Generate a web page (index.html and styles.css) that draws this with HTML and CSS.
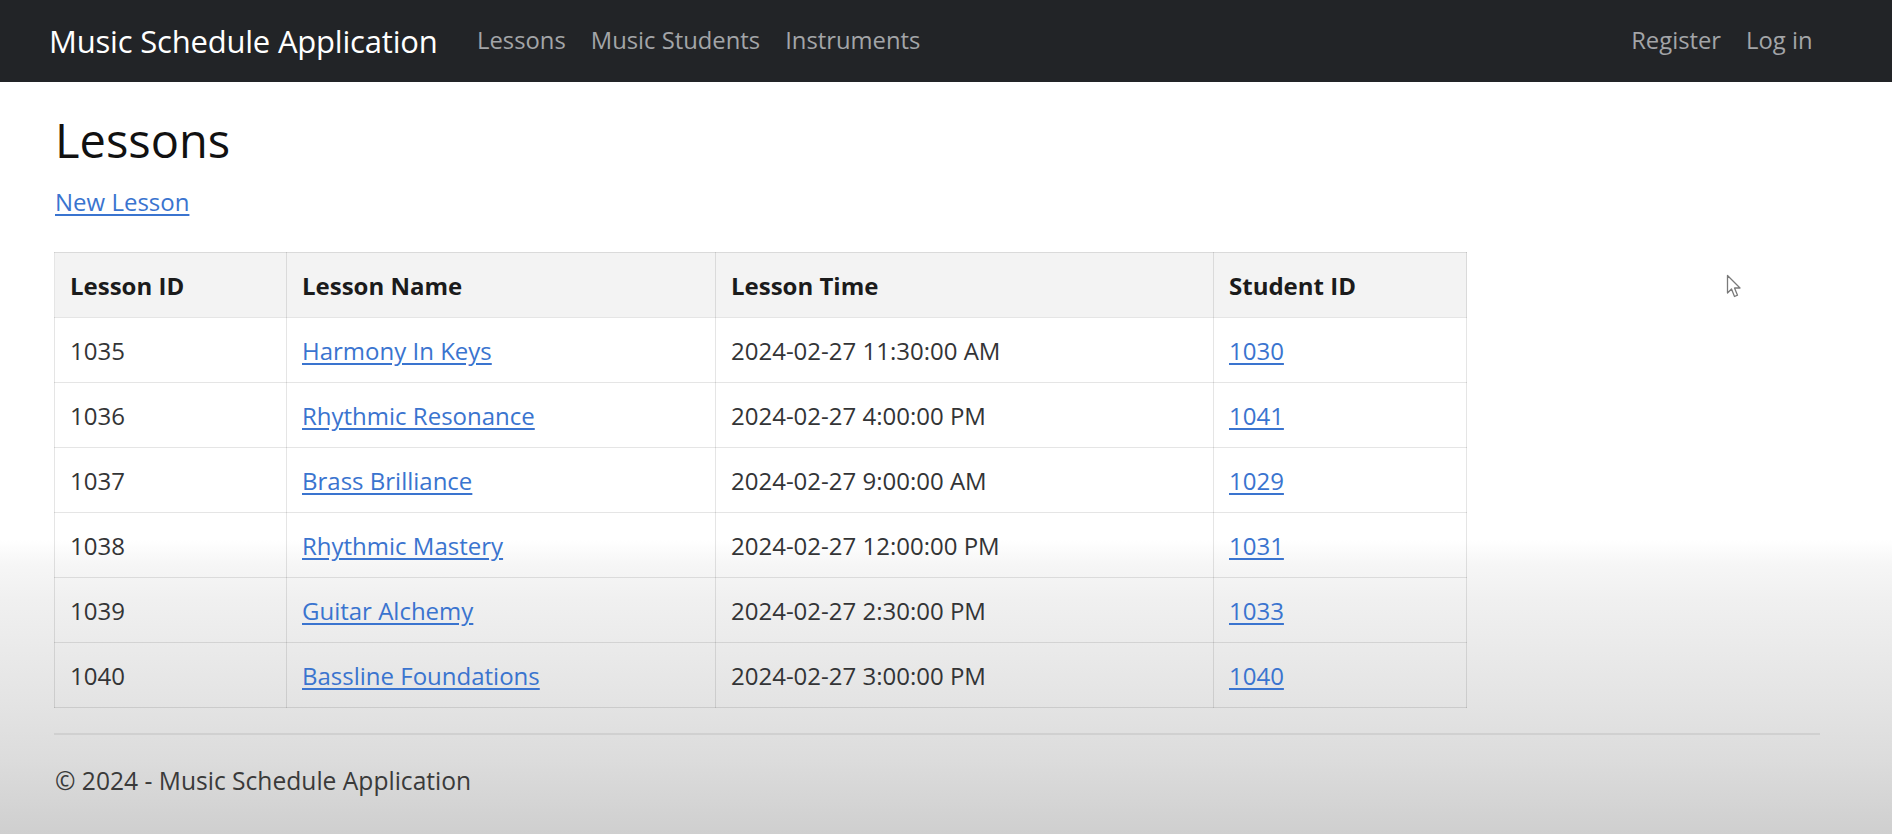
FILE: index.html
```html
<!DOCTYPE html>
<html lang="en">
<head>
<meta charset="utf-8">
<title>Lessons - Music Schedule Application</title>
<link rel="stylesheet" href="styles.css">
</head>
<body>
<header class="navbar">
  <a class="brand" href="#">Music Schedule Application</a>
  <nav class="nav-main">
    <a class="nav-link" href="#">Lessons</a>
    <a class="nav-link" href="#">Music Students</a>
    <a class="nav-link" href="#">Instruments</a>
  </nav>
  <nav class="nav-right">
    <a class="nav-link" href="#">Register</a>
    <a class="nav-link" href="#">Log in</a>
  </nav>
</header>
<main class="container">
  <h1 class="title">Lessons</h1>
  <p class="actions"><a href="#">New Lesson</a></p>
  <table class="lessons">
    <colgroup>
      <col class="c1"><col class="c2"><col class="c3"><col class="c4">
    </colgroup>
    <thead>
      <tr><th>Lesson ID</th><th>Lesson Name</th><th>Lesson Time</th><th>Student ID</th></tr>
    </thead>
    <tbody>
      <tr><td>1035</td><td><a href="#">Harmony In Keys</a></td><td>2024-02-27 11:30:00 AM</td><td><a href="#">1030</a></td></tr>
      <tr><td>1036</td><td><a href="#">Rhythmic Resonance</a></td><td>2024-02-27 4:00:00 PM</td><td><a href="#">1041</a></td></tr>
      <tr><td>1037</td><td><a href="#">Brass Brilliance</a></td><td>2024-02-27 9:00:00 AM</td><td><a href="#">1029</a></td></tr>
      <tr><td>1038</td><td><a href="#">Rhythmic Mastery</a></td><td>2024-02-27 12:00:00 PM</td><td><a href="#">1031</a></td></tr>
      <tr><td>1039</td><td><a href="#">Guitar Alchemy</a></td><td>2024-02-27 2:30:00 PM</td><td><a href="#">1033</a></td></tr>
      <tr><td>1040</td><td><a href="#">Bassline Foundations</a></td><td>2024-02-27 3:00:00 PM</td><td><a href="#">1040</a></td></tr>
    </tbody>
  </table>
  <footer class="footer">&copy; 2024 - Music Schedule Application</footer>
</main>
<svg class="cursor" width="18" height="26" viewBox="0 0 18 26" aria-hidden="true">
  <path d="M1.5 1.5 L1.5 19 L5.5 15 L8.5 22.5 L11.5 21.2 L8.5 14 L14 14 Z" fill="#ffffff" stroke="#7a7a7a" stroke-width="1.3" stroke-linejoin="round"/>
</svg>
</body>
</html>
```
FILE: styles.css
```css
html {
  background: #ffffff;
}
body {
  margin: 0;
  min-height: 834px;
  font-family: "Open Sans", "Noto Sans", "Liberation Sans", sans-serif;
  font-size: 24px;
  line-height: 1.5;
  color: #333436;
  background: linear-gradient(to bottom, #ffffff 0px, #ffffff 540px, #f6f6f6 565px, #f0f0f0 600px, #e4e4e4 700px, #dcdcdc 760px, #cfcfcf 834px);
  position: relative;
}
a {
  color: #3a74cf;
  text-decoration: underline;
  text-underline-offset: 3px;
}
.navbar {
  height: 82px;
  box-sizing: border-box;
  background: #222427;
  display: flex;
  align-items: center;
  padding: 0 67px 0 49px;
}
.brand {
  color: #ffffff;
  text-decoration: none;
  font-size: 31px;
  margin-right: 27px;
  letter-spacing: -0.2px;
}
.nav-main, .nav-right {
  display: flex;
  align-items: center;
}
.nav-right {
  margin-left: auto;
}
.nav-link {
  color: #a3a5a8;
  text-decoration: none;
  font-size: 23.8px;
  padding: 0 12.5px;
}
.container {
  padding: 0 72px 0 54px;
}
.title {
  margin: 29px 0 0 1px;
  font-size: 47px;
  font-weight: 400;
  line-height: 1.25;
  color: #111;
}
.actions {
  margin: 15px 0 0 1px;
  line-height: 34px;
}
.lessons {
  margin-top: 33px;
  border-collapse: collapse;
  table-layout: fixed;
  width: 1412px;
}
.c1 { width: 232px; }
.c2 { width: 429px; }
.c3 { width: 498px; }
.c4 { width: 253px; }
.lessons th, .lessons td {
  border: 1px solid rgba(0, 0, 0, 0.1);
  text-align: left;
  padding: 3px 15px 0;
  height: 65px;
  box-sizing: border-box;
}
.lessons th {
  background: #f3f3f3;
  font-weight: 700;
  color: #1b1b1b;
}
.footer {
  margin-top: 25px;
  border-top: 2px solid #d0d0d0;
  padding-top: 29px;
  padding-left: 1px;
  color: #3a3a3a;
  font-size: 24.6px;
  line-height: 34px;
}
.cursor {
  position: absolute;
  left: 1726px;
  top: 274px;
}
```
